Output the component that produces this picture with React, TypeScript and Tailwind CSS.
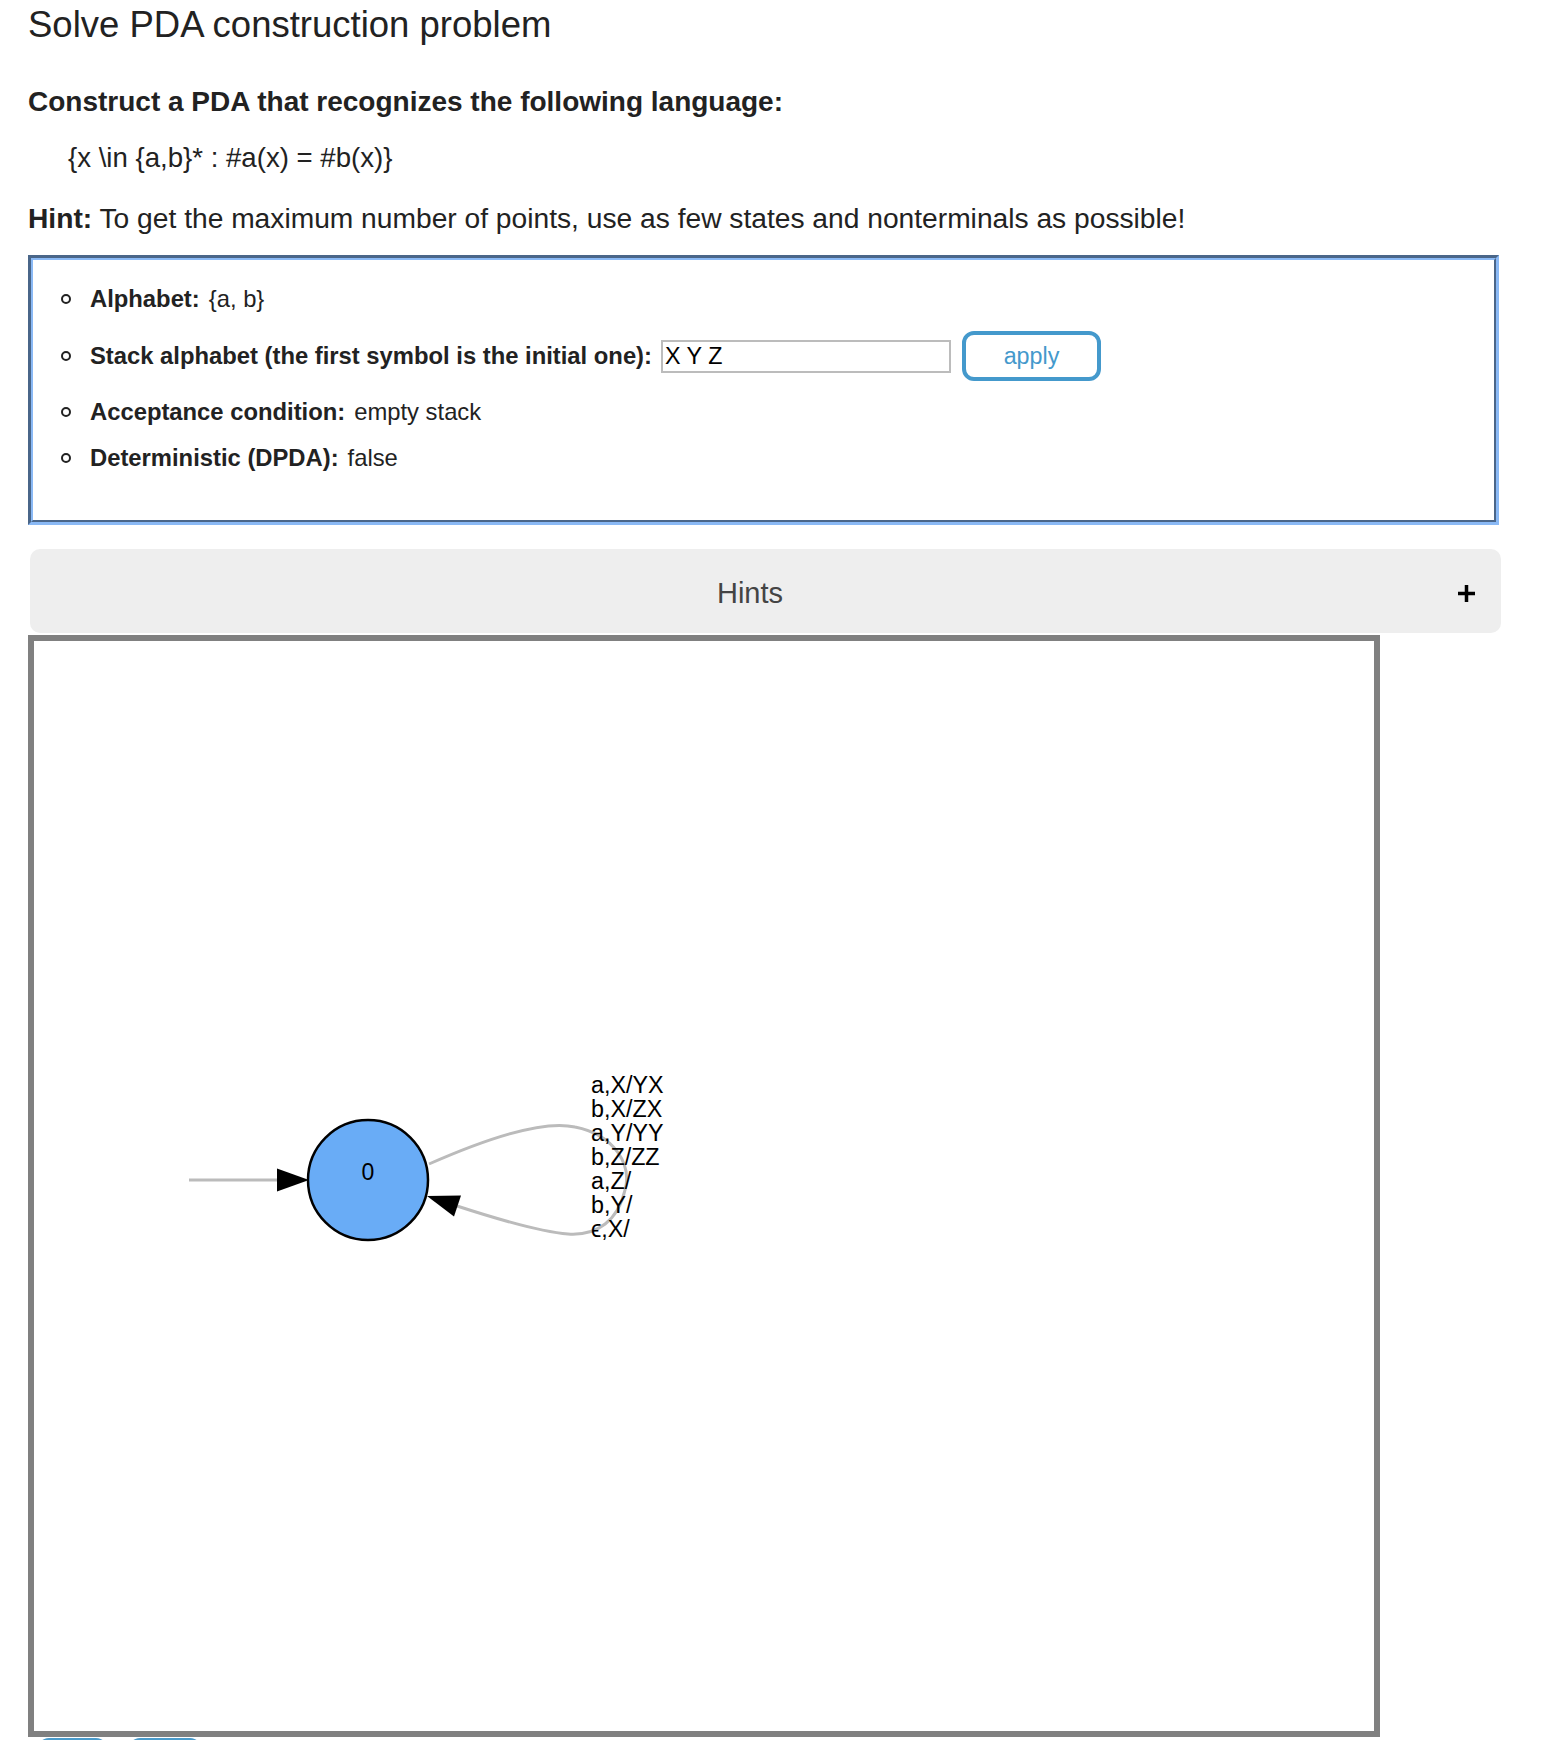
import React from "react";

const rows = ["a,X/YX", "b,X/ZX", "a,Y/YY", "b,Z/ZZ", "a,Z/", "b,Y/", "ϵ,X/"];

function Bullet() {
  return <span className="mr-[19px] ml-[28px] inline-block h-[10px] w-[10px] shrink-0 rounded-full border-[2px] border-[#222]" />;
}

function PdaGraph() {
  return (
    <svg width="1340" height="1090" viewBox="34 641 1340 1090" className="block">
      <line x1="189" y1="1180" x2="280" y2="1180" stroke="#bbbbbb" strokeWidth="3" />
      <polygon points="309,1180 277,1168.5 277,1191.5" fill="#000" />
      <circle cx="368" cy="1180" r="60" fill="#69acf6" stroke="#000" strokeWidth="2.5" />
      <text x="368" y="1180" textAnchor="middle" fontFamily="'Liberation Sans', Arial, sans-serif" fontSize="23" fill="#000">
        0
      </text>
      <path
        d="M429 1164 C488 1138 545 1120 575 1127 C615 1135 632 1165 625 1190 C618 1220 598 1236 568 1234 C540 1232 500 1220 457 1206"
        fill="none"
        stroke="#bbbbbb"
        strokeWidth="3"
      />
      <polygon points="427,1196 461,1195.5 454,1216.5" fill="#000" />
      {rows.map((r, i) => (
        <text
          key={r}
          x="591"
          y={1093 + i * 24}
          fontFamily="'Liberation Sans', Arial, 'DejaVu Sans', sans-serif"
          fontSize="23.3"
          fill="#000"
        >
          {r}
        </text>
      ))}
    </svg>
  );
}

export default function App() {
  return (
    <div className="min-h-[1740px] overflow-hidden bg-white pl-[28px] font-['Liberation_Sans',Arial,sans-serif] text-[#222]">
      <h1 className="pt-[5px] text-[36.5px] leading-[40px] font-normal">Solve PDA construction problem</h1>
      <p className="mt-[41px] text-[28px] leading-[32px] font-bold">
        Construct a PDA that recognizes the following language:
      </p>
      <p className="mt-[24px] ml-[40px] text-[27.6px] leading-[32px]">{"{x \\in {a,b}* : #a(x) = #b(x)}"}</p>
      <p className="mt-[28px] text-[28.2px] leading-[32px]">
        <b>Hint:</b> To get the maximum number of points, use as few states and nonterminals as possible!
      </p>

      <div className="mt-[21px] w-[1471px] border-[3px] border-t-[#4a6689] border-l-[#4a6689] border-r-[#8ab9f5] border-b-[#8ab9f5]">
        <div className="border-[2px] border-t-[#8ab9f5] border-l-[#8ab9f5] border-r-[#4a6689] border-b-[#4a6689] pt-[25px] pb-[48px]">
          <ul className="flex flex-col gap-[18px] text-[23.8px] leading-[28px]">
            <li className="flex h-[28px] items-center">
              <Bullet />
              <b>Alphabet:</b>
              <span className="ml-[9px]">{"{a, b}"}</span>
            </li>
            <li className="flex h-[50px] items-center">
              <Bullet />
              <b>Stack alphabet (the first symbol is the initial one):</b>
              <input
                defaultValue="X Y Z"
                className="ml-[9px] h-[33px] w-[290px] border-[2px] border-[#bcbcbc] pl-[2px] text-[23.3px] text-black outline-none"
              />
              <button className="ml-[11px] h-[50px] w-[139px] rounded-[12px] border-[4px] border-[#4499cc] bg-white text-[23.3px] text-[#4499cc]">
                apply
              </button>
            </li>
            <li className="-mt-[1px] flex h-[28px] items-center">
              <Bullet />
              <b>Acceptance condition:</b>
              <span className="ml-[9px]">empty stack</span>
            </li>
            <li className="flex h-[28px] items-center">
              <Bullet />
              <b>Deterministic (DPDA):</b>
              <span className="ml-[9px]">false</span>
            </li>
          </ul>
        </div>
      </div>

      <div className="relative mt-[24px] ml-[2px] flex h-[84px] w-[1471px] items-center rounded-[10px] bg-[#eeeeee] pr-[31px]">
        <span className="mt-[6px] flex-1 text-center text-[29px] text-[#444]">Hints</span>
        <svg width="17" height="17" viewBox="0 0 17 17" className="absolute top-[36px] left-[1428px]">
          <rect x="6.75" y="0" width="3.5" height="17" fill="#000" />
          <rect x="0" y="6.75" width="17" height="3.5" fill="#000" />
        </svg>
      </div>

      <div className="mt-[2px] h-[1102px] w-[1352px] border-[6px] border-[#808080] bg-white">
        <PdaGraph />
      </div>

      <div className="mt-[1px] flex gap-[20px] pl-[9px]">
        <button className="h-[50px] w-[71px] rounded-[12px] border-[3px] border-[#4a9bcb] bg-white" />
        <button className="h-[50px] w-[74px] rounded-[12px] border-[3px] border-[#4a9bcb] bg-white" />
      </div>
    </div>
  );
}
